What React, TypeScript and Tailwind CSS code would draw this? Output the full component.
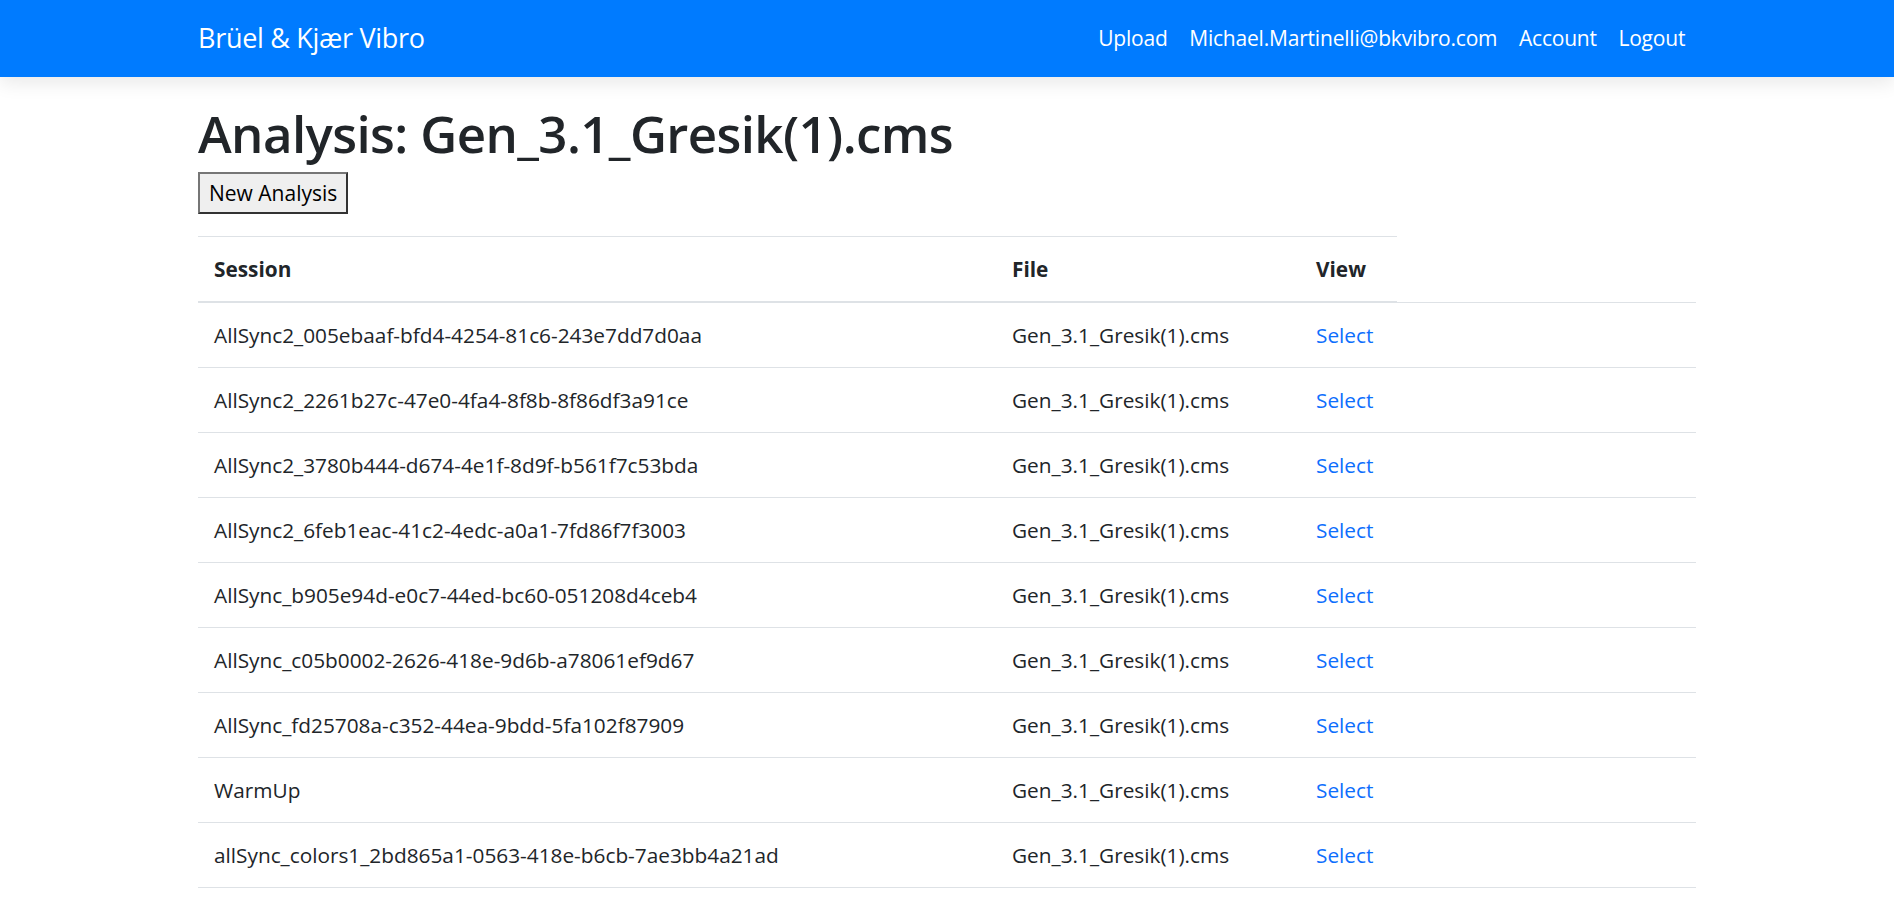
import React from "react";

const sessions = [
  "AllSync2_005ebaaf-bfd4-4254-81c6-243e7dd7d0aa",
  "AllSync2_2261b27c-47e0-4fa4-8f8b-8f86df3a91ce",
  "AllSync2_3780b444-d674-4e1f-8d9f-b561f7c53bda",
  "AllSync2_6feb1eac-41c2-4edc-a0a1-7fd86f7f3003",
  "AllSync_b905e94d-e0c7-44ed-bc60-051208d4ceb4",
  "AllSync_c05b0002-2626-418e-9d6b-a78061ef9d67",
  "AllSync_fd25708a-c352-44ea-9bdd-5fa102f87909",
  "WarmUp",
  "allSync_colors1_2bd865a1-0563-418e-b6cb-7ae3bb4a21ad",
];

const fileName = "Gen_3.1_Gresik(1).cms";

export default function App() {
  return (
    <div className="min-h-screen bg-white text-[#212529] font-['Open_Sans',sans-serif] text-[20.8px]">
      <nav className="h-[77px] bg-[#007bff] shadow-[0_6px_18px_rgba(0,0,0,0.09)]">
        <div className="w-[1498px] mx-auto h-full flex items-center justify-between">
          <a href="#" className="text-white text-[27px] tracking-[-0.3px]">
            Brüel &amp; Kjær Vibro
          </a>
          <div className="flex items-center">
            {["Upload", "Michael.Martinelli@bkvibro.com", "Account", "Logout"].map((l) => (
              <a key={l} href="#" className="text-white px-[10.8px] text-[21px] tracking-[-0.2px]">
                {l}
              </a>
            ))}
          </div>
        </div>
      </nav>

      <main className="w-[1498px] mx-auto pt-[26px]">
        <h1 className="text-[51px] leading-[1.2] font-semibold mb-[8px] tracking-[-0.6px]">
          Analysis: {fileName}
        </h1>
        <button className="h-[42px] px-[9px] bg-[#efefef] border-2 border-t-[#767676] border-l-[#767676] border-r-[#333] border-b-[#333] text-black leading-none text-[21px]">
          New Analysis
        </button>

        <table className="mt-[22px] table-fixed border-collapse text-left w-[1498px]">
          <colgroup>
            <col className="w-[798px]" />
            <col className="w-[304px]" />
            <col className="w-[97px]" />
            <col className="w-[299px]" />
          </colgroup>
          <thead>
            <tr>
              <th className="font-bold border-t border-b-2 border-[#dee2e6] px-[16px] py-[16px] leading-[32px]">Session</th>
              <th className="font-bold border-t border-b-2 border-[#dee2e6] px-[16px] py-[16px] leading-[32px]">File</th>
              <th className="font-bold border-t border-b-2 border-[#dee2e6] px-[16px] py-[16px] leading-[32px]">View</th>
            </tr>
          </thead>
          <tbody>
            {sessions.map((s) => (
              <tr key={s} className="last:border-b last:border-[#dee2e6]">
                <td className="border-t border-[#dee2e6] px-[16px] py-[16px] leading-[32px] whitespace-nowrap">{s}</td>
                <td className="border-t border-[#dee2e6] px-[16px] py-[16px] leading-[32px] whitespace-nowrap">{fileName}</td>
                <td className="border-t border-[#dee2e6] px-[16px] py-[16px] leading-[32px]">
                  <a href="#" className="text-[#0d6efd]">Select</a>
                </td>
                <td className="border-t border-[#dee2e6]"></td>
              </tr>
            ))}
          </tbody>
        </table>
      </main>
    </div>
  );
}
